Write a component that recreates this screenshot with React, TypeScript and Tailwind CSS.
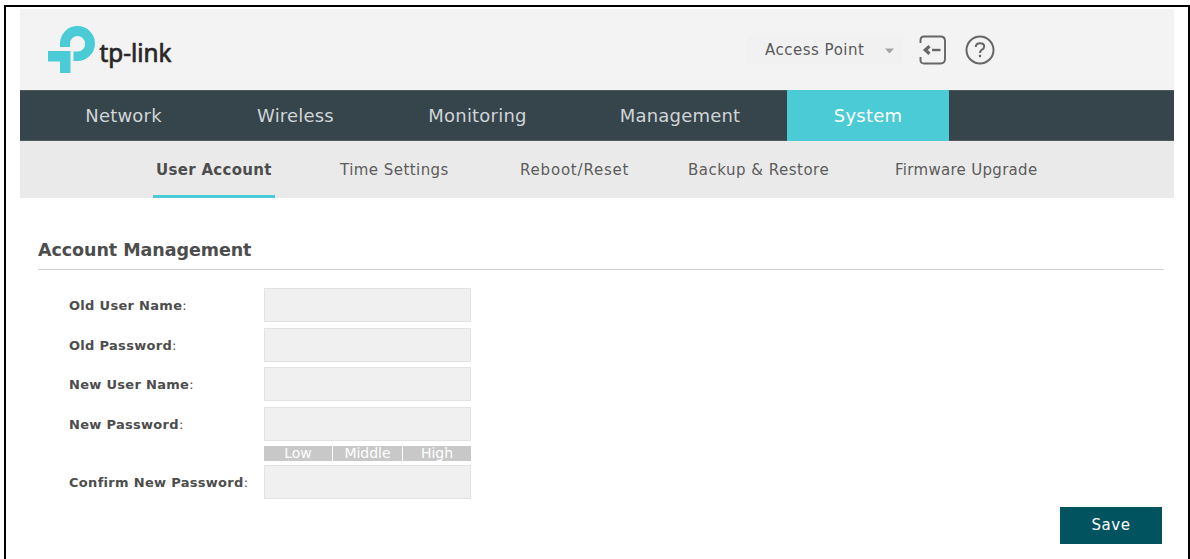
import { useState } from 'react';

interface NavItem {
  label: string;
  className: string;
}

const NAV_ITEMS: NavItem[] = [
  { label: 'Network', className: 'w-[171px]' },
  { label: 'Wireless', className: 'w-[173px]' },
  { label: 'Monitoring', className: 'w-[191px]' },
  { label: 'Management', className: 'w-[214px]' },
  { label: 'System', className: 'w-[162px]' },
];

const SUB_ITEMS: NavItem[] = [
  { label: 'User Account', className: 'w-[184px] tracking-[0.3px]' },
  { label: 'Time Settings', className: 'w-[180px] tracking-[0.45px]' },
  { label: 'Reboot/Reset', className: 'w-[168px] tracking-[0.8px]' },
  { label: 'Backup & Restore', className: 'w-[207px] tracking-[0.5px]' },
  { label: 'Firmware Upgrade', className: 'w-[160px] tracking-[0.3px]' },
];

function Logo() {
  return (
    <svg width="136" height="56" viewBox="48 25 136 56" className="overflow-visible" role="img" aria-label="tp-link">
      <g fill="#4acbd6">
        <path d="M60 47V43.5A17.5 17.5 0 1 1 77.5 61H73.5V51.5H77.5A7.500 7.500 0 0 0 85 43.500A7.500 7.500 0 0 0 70 43.500V47Z" />
        <path d="M48 51H70.5V73H60V61.5H48Z" />
      </g>
      <text
        x="99.5"
        y="61.5"
        fontSize="24.5"
        fontWeight="400"
        fontFamily="'Noto Sans', sans-serif"
        textLength="72"
        lengthAdjust="spacingAndGlyphs"
        fill="#2b2627"
        stroke="#2b2627"
        strokeWidth="0.7"
        strokeLinejoin="round"
      >
        tp-link
      </text>
    </svg>
  );
}

function LogoutIcon() {
  return (
    <svg width="28" height="30" viewBox="0 0 28 30" fill="none" stroke="#666" strokeWidth="1.9">
      <path d="M1.500 8V5.500Q1.500 1.500 5 1.500H21.500Q26 1.500 26 6V24Q26 28.500 21.500 28.500H5Q1.500 28.500 1.500 25V22" />
      <path d="M13 15H21.500" strokeWidth="2.4" />
      <path d="M10.500 11.300L6.300 15L10.500 18.700" strokeWidth="3.2" />
    </svg>
  );
}

function HelpIcon() {
  return (
    <svg width="30" height="30" viewBox="0 0 30 30" fill="none" stroke="#666" strokeWidth="2">
      <circle cx="15" cy="15" r="13.500" />
      <path d="M10.800 12Q10.800 8.300 15 8.300Q19.200 8.300 19.200 11.500Q19.200 13.500 17 14.700Q15 15.800 15 18" />
      <path d="M15 19.800V22.200" strokeWidth="2.2" />
    </svg>
  );
}

interface FieldProps {
  label: string;
  type?: string;
}

function Field({ label, type = 'text' }: FieldProps) {
  return (
    <label className="flex h-[34px] items-center">
      <span className="w-[196px] pt-0.5 pl-px text-[13px] tracking-[0.3px] whitespace-nowrap">
        <b>{label}</b>:
      </span>
      <input type={type} className="h-[34px] w-[207px] border border-[#e2e2e2] bg-[#f0f0f0] px-2 outline-none" />
    </label>
  );
}

export default function App() {
  const [section, setSection] = useState('System');
  const [page, setPage] = useState('User Account');

  return (
    <div className="h-[559px] w-[1190px] overflow-hidden bg-white pl-[4px] pt-[5px] font-['DejaVu_Sans',Verdana,sans-serif] text-[#4d4d4d]">
      <div className="h-[560px] w-[1186px] border-2 border-black pl-[14px] pt-[2px]">
        <div className="w-[1154px]">
          <header className="flex h-[81px] items-start bg-[#f3f3f3] pl-7 pt-4">
            <Logo />
            <div className="ml-[563px] mt-[11px] flex h-[28px] w-[156px] items-center bg-[#f1f1f1] pl-[18px] text-[15px] tracking-[0.5px] text-[#595959]">
              <span className="w-[120px] whitespace-nowrap">Access Point</span>
              <svg width="9" height="6" viewBox="0 0 9 6" className="mt-[2px]">
                <path d="M0 0.500H9L4.500 5.500Z" fill="#a3a3a3" />
              </svg>
            </div>
            <button className="ml-4 mt-[10px]"><LogoutIcon /></button>
            <button className="ml-[18px] mt-[10px]"><HelpIcon /></button>
          </header>

          <nav className="flex h-[51px] border-y border-[#4f5a5c] bg-[#36444b] pl-[18px]">
            {NAV_ITEMS.map((item) => (
              <button
                key={item.label}
                onClick={() => setSection(item.label)}
                className={`${item.className} text-[18px] tracking-[0.2px] ${
                  section === item.label ? '-my-px bg-[#4acbd6] text-white' : 'text-[#d0d5d7]'
                }`}
              >
                {item.label}
              </button>
            ))}
          </nav>

          <nav className="flex h-[57px] bg-[#eaeaea] pl-[133px] text-[15px]">
            {SUB_ITEMS.map((item) => (
              <div key={item.label} className={`${item.className} flex items-stretch`}>
                <button
                  onClick={() => setPage(item.label)}
                  className={`whitespace-nowrap border-b-[3px] px-[3px] pt-[5px] ${
                    page === item.label ? 'border-[#4acbd6] font-bold' : 'border-transparent text-[#5c5c5c]'
                  }`}
                >
                  {item.label}
                </button>
              </div>
            ))}
          </nav>

          <main className="pl-[18px] pr-[10px] pt-[40px]">
            <h1 className="h-[32px] border-b border-[#d3d3d3] text-[17.5px] leading-[25px] font-bold tracking-[-0.06px]">
              Account Management
            </h1>
            <form className="pl-[30px] pt-[18px]" onSubmit={(e) => e.preventDefault()}>
              <div className="flex flex-col gap-[5.5px]">
                <Field label="Old User Name" />
                <Field label="Old Password" type="password" />
                <Field label="New User Name" />
                <Field label="New Password" type="password" />
              </div>
              {/* Password strength */}
              <div className="mt-[5px] mb-1 ml-[196px] flex h-[15px] w-[207px] gap-px text-center text-[14px] leading-[15px] text-white">
                <span className="w-[68px] bg-[#c8c8c8]">Low</span>
                <span className="w-[69px] bg-[#c8c8c8]">Middle</span>
                <span className="w-[68px] bg-[#c8c8c8]">High</span>
              </div>
              <Field label="Confirm New Password" type="password" />
            </form>
            <div className="mt-[8px] flex justify-end pr-[2px]">
              <button className="h-[37px] w-[102px] bg-[#00535f] text-[15px] tracking-[0.5px] text-white">Save</button>
            </div>
          </main>
        </div>
      </div>
    </div>
  );
}
